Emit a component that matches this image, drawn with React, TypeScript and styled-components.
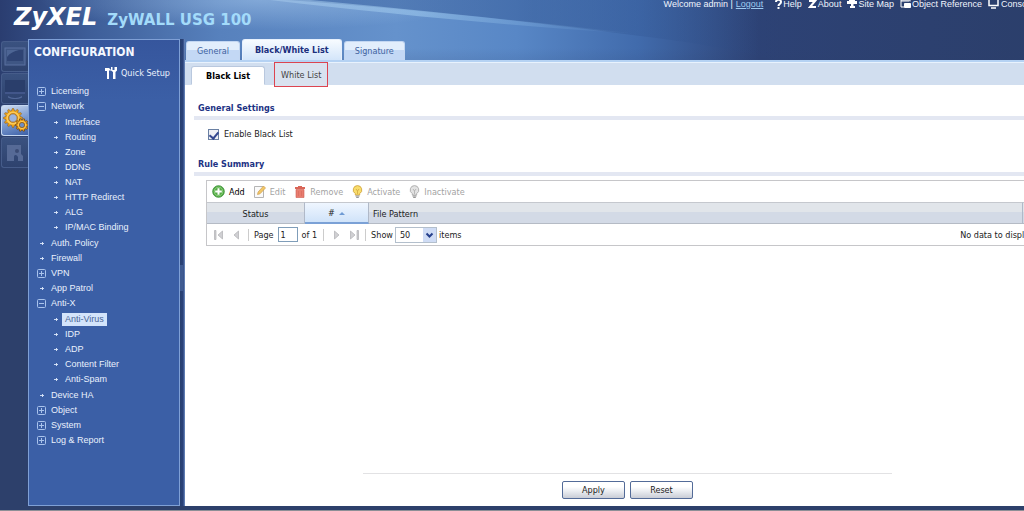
import React from "react";
import styled, { createGlobalStyle } from "styled-components";

const ui = `"DejaVu Sans Condensed", "DejaVu Sans", sans-serif`;
const arial = `"Liberation Sans", Arial, sans-serif`;

const Global = createGlobalStyle`
  * { box-sizing: border-box; }
  html, body, #root { height: 100%; }
  body { margin: 0; overflow: hidden; background: #2d406b; font: 9px/14px ${ui}; color: #222; }
  button, input, select { font: inherit; color: inherit; margin: 0; }
  button { cursor: pointer; }
`;

const Page = styled.div`
  width: calc(100% + 46px);
  height: 100%;
  display: flex;
  flex-direction: column;
  position: relative;
  isolation: isolate;
  white-space: nowrap;
  border-bottom: 1px solid #8d8f96;
`;
const Swoosh = styled.svg`
  position: absolute;
  z-index: -1;
  top: 0;
  left: 0;
`;
const Header = styled.header`
  display: flex;
  justify-content: space-between;
  height: 39px;
  padding: 0 36px 0 14px;
`;
const Brand = styled.div`
  display: flex;
  align-items: baseline;
  gap: 10px;
  font-family: "DejaVu Sans", sans-serif;
  font-weight: bold;
`;
const Logo = styled.span`
  color: #fff;
  font-size: 24px;
  line-height: 34px;
  font-style: italic;
`;
const Model = styled.span`
  color: #a3dbfa;
  font-size: 15px;
`;
const TopLinks = styled.nav`
  display: flex;
  height: 8px;
  align-items: center;
  color: #f0f5fd;
  font-family: ${arial};
`;
const TopLink = styled.a<{ $underline?: boolean; $gap?: number }>`
  display: flex;
  align-items: center;
  gap: 1px;
  margin-left: ${(p) => p.$gap ?? 6}px;
  color: ${(p) => (p.$underline ? "#9fcbf0" : "inherit")};
  text-decoration: ${(p) => (p.$underline ? "underline" : "none")};
`;
const Body = styled.div`
  flex: 1;
  display: flex;
  min-height: 0;
  padding-bottom: 4px;
`;
const Rail = styled.nav`
  width: 28px;
  padding-top: 2px;
  display: flex;
  flex-direction: column;
  gap: 1px;
`;
const RailButton = styled.button<{ $active?: boolean }>`
  height: 31px;
  width: ${(p) => (p.$active ? 28 : 27)}px;
  margin-left: 1px;
  padding: 0;
  display: flex;
  align-items: center;
  justify-content: center;
  border: 1px solid ${(p) => (p.$active ? "#c5d8f2" : "#465c8a")};
  border-right: 0;
  border-radius: 3px 0 0 3px;
  background: ${(p) => (p.$active ? "linear-gradient(160deg, #d0def2, #7c9bd0 50%, #3b5fa7)" : "linear-gradient(#3a5280, #2e426e)")};
`;
const Sidebar = styled.aside`
  width: 152px;
  border: 1px solid #7fa0d6;
  background: linear-gradient(#36569d, #3b5fa6 60px);
  color: #e9f1fd;
  font-family: ${arial};
`;
const SideTitle = styled.h1`
  margin: 0;
  padding: 5px 5px 0;
  font: bold 12px/14px ${ui};
  color: #f4f8ff;
`;
const QuickSetup = styled.a`
  display: flex;
  align-items: center;
  justify-content: flex-end;
  gap: 4px;
  margin: 6px 9px 3px 0;
  height: 16px;
  color: inherit;
  text-decoration: none;
  font-family: ${ui};
`;
const Tree = styled.ul<{ $nested?: boolean }>`
  list-style: none;
  margin: 0;
  padding: ${(p) => (p.$nested ? "1px 0 1px 14px" : "0 0 0 8px")};
`;
const TreeItem = styled.a<{ $selected?: boolean }>`
  display: flex;
  align-items: center;
  gap: 2px;
  height: 15px;
  color: inherit;
  text-decoration: none;
  span {
    padding: 0 3px;
    line-height: 13px;
    background: ${(p) => (p.$selected ? "#d3e4fb" : "none")};
    color: ${(p) => (p.$selected ? "#4a6496" : "inherit")};
  }
`;
const Splitter = styled.div`
  width: 5px;
  display: flex;
  align-items: center;
  background: linear-gradient(90deg, #28406f, #2a427a 60%, #6f8fc4);
`;
const SplitterGrip = styled.i`
  width: 3px;
  height: 26px;
  margin-top: 10px;
  background: #3f5b92;
`;
const Main = styled.main`
  flex: 1;
  min-width: 0;
  display: flex;
  flex-direction: column;
`;
const Tabs = styled.div`
  display: flex;
  align-items: flex-end;
  gap: 2px;
  height: 21px;
  padding-left: 1px;
`;
const Tab = styled.button<{ $active?: boolean }>`
  height: ${(p) => (p.$active ? 21 : 19)}px;
  padding: 0 ${(p) => (p.$active ? 12 : 10)}px;
  border: 1px solid ${(p) => (p.$active ? "#e6f0fd" : "#c3d7f2")};
  border-bottom: 0;
  border-radius: 3px 3px 0 0;
  background: ${(p) => (p.$active ? "linear-gradient(#f7fbff, #d3e5fa)" : "linear-gradient(#e2eefc 45%, #c3d8f5 45%)")};
  color: ${(p) => (p.$active ? "#1b2f7d" : "#41639f")};
  font-weight: ${(p) => (p.$active ? "bold" : "normal")};
`;
const SubTabs = styled.div`
  display: flex;
  align-items: flex-end;
  gap: 9px;
  height: 25px;
  padding-left: 6px;
  position: relative;
  z-index: 1;
  background: #d1deef;
  border-top: 2px solid #b5d2f3;
  box-shadow: inset 0 1px #e8f2fd;
`;
const SubTab = styled.button<{ $active?: boolean }>`
  height: ${(p) => (p.$active ? 19 : 25)}px;
  margin-bottom: ${(p) => (p.$active ? 0 : -2)}px;
  padding: 0 ${(p) => (p.$active ? 14 : 6)}px;
  border: 1px solid ${(p) => (p.$active ? "#b9c8de" : "#dc4450")};
  border-bottom-color: ${(p) => (p.$active ? "#fff" : "#dc4450")};
  border-radius: ${(p) => (p.$active ? "3px 3px 0 0" : "0")};
  background: ${(p) => (p.$active ? "#fff" : "#d9e2ef")};
  color: ${(p) => (p.$active ? "#000" : "#444")};
  font-weight: ${(p) => (p.$active ? "bold" : "normal")};
`;
const Panel = styled.div`
  flex: 1;
  display: flex;
  flex-direction: column;
  background: #fff;
  padding: 16px 9px 7px;
`;
const SectionTitle = styled.h2`
  margin: 0;
  padding: 0 4px 1px;
  border-bottom: 4px solid #e3e7f2;
  color: #1c3284;
  font: bold 9px/14px ${ui};
`;
const CheckRow = styled.label`
  display: flex;
  align-items: center;
  gap: 5px;
  padding: 7px 14px 16px;
  height: 37px;
`;
const Check = styled.input`
  appearance: none;
  width: 11px;
  height: 11px;
  margin: 0;
  border: 1px solid #6a80a3;
  background: #eef0f5;
  display: grid;
  place-items: center;
  &:checked::after {
    content: "";
    width: 4px;
    height: 7px;
    border: solid #33478f;
    border-width: 0 2px 2px 0;
    transform: rotate(40deg);
  }
`;
const GridBox = styled.section`
  margin: 4px 17px 0 12px;
  border: 1px solid #c6c6c9;
`;
const Toolbar = styled.div`
  display: flex;
  align-items: center;
  gap: 9px;
  height: 21px;
  padding-left: 5px;
`;
const Tool = styled.button`
  display: flex;
  align-items: center;
  gap: 4px;
  padding: 0;
  border: 0;
  background: none;
  color: #000;
  &:disabled { color: #a3a3a3; }
`;
const Table = styled.table`
  width: 100%;
  border-collapse: separate;
  border-spacing: 0;
  table-layout: fixed;
`;
const Th = styled.th<{ $w?: number; $sorted?: boolean; $left?: boolean }>`
  width: ${(p) => (p.$w ? p.$w + "px" : "auto")};
  height: 22px;
  padding: 1px 4px 0;
  font-weight: normal;
  text-align: ${(p) => (p.$left ? "left" : "center")};
  border-top: 1px solid #c5c8ce;
  border-right: 1px solid #b0b9c8;
  border-bottom: ${(p) => (p.$sorted ? "2px solid #7ba1d6" : "1px solid #b5bbc5")};
  background: ${(p) => (p.$sorted ? "linear-gradient(#eff6ff, #d0e3f9)" : "linear-gradient(#e1e5ea 45%, #d3dae6 45%)")};
  svg { margin-left: 4px; }
`;
const Pager = styled.div`
  display: flex;
  align-items: center;
  height: 21px;
  padding: 0 9px 0 5px;
`;
const PageNav = styled.div`
  display: flex;
  gap: 8px;
  margin: 0 6px 0 2px;
`;
const PageButton = styled.button`
  display: flex;
  padding: 0;
  border: 0;
  background: none;
`;
const Divider = styled.i`
  width: 1px;
  height: 12px;
  margin-right: 5px;
  background: #ccc;
`;
const PageBox = styled.input`
  width: 20px;
  height: 15px;
  margin: 0 4px;
  padding: 0 2px;
  border: 1px solid #7f9db9;
`;
const PageCount = styled.span`
  margin-right: 6px;
`;
const PageSize = styled.span`
  position: relative;
  display: flex;
  margin: 0 2px;
  svg { position: absolute; right: 1px; top: 1px; pointer-events: none; }
`;
const Select = styled.select`
  appearance: none;
  width: 42px;
  height: 16px;
  padding: 0 4px;
  border: 1px solid #b3bfcc;
  border-radius: 0;
  background: #fff;
`;
const Status = styled.span`
  margin-left: auto;
`;
const Footer = styled.footer`
  display: flex;
  justify-content: center;
  gap: 5px;
  width: 61%;
  margin: auto auto 0;
  padding-top: 7px;
  border-top: 1px solid #e2e2e4;
`;
const FormButton = styled.button`
  width: 63px;
  height: 18px;
  padding: 0;
  border: 1px solid #536b98;
  border-radius: 2px;
  background: linear-gradient(#fff 30%, #eceef2 55%, #c9cdd6);
`;

const ToggleIcon = ({ kind }: { kind: string }) => (
  <svg width="9" height="9" viewBox="0 0 9 9" fill="none" stroke="#a9c3ec">
    {kind !== "leaf" && <rect x=".5" y=".5" width="8" height="8" rx="1" />}
    {kind === "leaf" ? (
      <path d="M3 4.500h4M5.500 3v3" stroke="#dce8fb" strokeWidth=".9" />
    ) : (
      <path d={kind === "plus" ? "M2 4.500h5M4.500 2v5" : "M2 4.500h5"} />
    )}
  </svg>
);

type MenuNode = { t: string; k?: string; c?: string[] };
const tree: MenuNode[] = [
  { t: "Licensing", k: "plus" },
  { t: "Network", k: "minus", c: ["Interface", "Routing", "Zone", "DDNS", "NAT", "HTTP Redirect", "ALG", "IP/MAC Binding"] },
  { t: "Auth. Policy" },
  { t: "Firewall" },
  { t: "VPN", k: "plus" },
  { t: "App Patrol" },
  { t: "Anti-X", k: "minus", c: ["Anti-Virus", "IDP", "ADP", "Content Filter", "Anti-Spam"] },
  { t: "Device HA" },
  { t: "Object", k: "plus" },
  { t: "System", k: "plus" },
  { t: "Log & Report", k: "plus" },
];

const gearPath = (cx: number, cy: number, r: number, n: number) => {
  const pts: string[] = [];
  for (let i = 0; i < n * 4; i++) {
    const a = ((i - 0.5) / (n * 4)) * Math.PI * 2;
    const rr = i % 4 < 2 ? r : r * 0.78;
    pts.push(`${(cx + rr * Math.cos(a)).toFixed(2)} ${(cy + rr * Math.sin(a)).toFixed(2)}`);
  }
  return `M${pts.join("L")}Z`;
};

const Gears = () => (
  <svg width="27" height="25" viewBox="0 0 27 25">
    <path d={gearPath(11, 10, 9.5, 12)} fill="#f0a51b" stroke="#8a5a1a" strokeWidth=".6" />
    <circle cx="11" cy="10" r="5.800" fill="none" stroke="#fbcb58" strokeWidth="1.600" />
    <circle cx="11" cy="10" r="4.200" fill="#9db5de" stroke="#9a6218" strokeWidth=".8" />
    <path d={gearPath(20, 17, 6.5, 10)} fill="#f0a31c" stroke="#6f430f" strokeWidth=".8" />
    <circle cx="20" cy="17" r="3.600" fill="none" stroke="#fbcb58" />
    <circle cx="20" cy="17" r="2.600" fill="#6d8ec8" stroke="#8d5a14" strokeWidth=".8" />
  </svg>
);
const MonitorIcon = () => (
  <svg width="22" height="20" viewBox="0 0 22 20">
    <rect x="1" y="1" width="20" height="17" fill="#3f5684" stroke="#5a70a0" />
    <rect x="3" y="3" width="16" height="11" fill="#2f4474" />
    <path d="M3 10V3h12C10 4 6 6 3 10z" fill="#4d6594" />
  </svg>
);
const ScreenIcon = () => (
  <svg width="22" height="22" viewBox="0 0 22 22">
    <rect x="1" y="2" width="20" height="12" fill="#2a3e6b" />
    <path d="M1 14h20v2H1z" fill="#42568a" />
    <path d="M4 18c4 2.500 10 2.500 14 0v1.500c-4 2-10 2-14 0z" fill="#526899" />
  </svg>
);
const PuzzleIcon = () => (
  <svg width="18" height="20" viewBox="0 0 18 20">
    <path d="M1 2h14v9l2 2v5h-5v-4c-2-3-4-2-4 0v4H1z" fill="#566a96" />
    <circle cx="11" cy="8" r="2" fill="#3a4b74" />
  </svg>
);
const ToolsIcon = () => (
  <svg width="12" height="12" viewBox="0 0 12 12" fill="#fff">
    <path d="M0 1h4l2 2-1 1-1-1v9H2V4H0z" />
    <path d="M6 0h1.500v3h2V0H12v3.500L10.500 5v7H8V5L6 3.500z" />
  </svg>
);
const PageArrow = ({ bar, flip }: { bar?: boolean; flip?: boolean }) => (
  <svg width="10" height="10" viewBox="0 0 10 10" fill="#d0d0d3" stroke="#a6a6aa" strokeWidth=".6">
    <g transform={flip ? "matrix(-1 0 0 1 10 0)" : undefined}>
      {bar && <path d="M.5.5H2v9H.5z" />}
      <path d={bar ? "M8.500 1v8L4 5z" : "M6.500 1v8L2 5z"} />
    </g>
  </svg>
);
const Bulb = ({ color, line }: { color: string; line: string }) => (
  <svg width="11" height="13" viewBox="0 0 11 13">
    <path d="M5.500.6a4.300 4.300 0 0 1 2.200 8v1.400H3.300V8.600a4.300 4.300 0 0 1 2.200-8z" fill={color} stroke={line} strokeWidth=".8" />
    <path d="M3.500 11h4M4.200 12.400h2.600" stroke="#8b8b8b" />
    <path d="M4 4l1.500 2L7 4M5.500 6v3" stroke={line} strokeWidth=".7" fill="none" />
  </svg>
);

const rail = [
  { n: "Dashboard", i: <MonitorIcon /> },
  { n: "Monitor", i: <ScreenIcon /> },
  { n: "Configuration", i: <Gears />, a: true },
  { n: "Maintenance", i: <PuzzleIcon /> },
];

export default function App() {
  return (
    <>
      <Global />
      <Page>
        <Swoosh width="1100" height="160" viewBox="0 0 1100 160" aria-hidden="true">
          <defs>
            <linearGradient id="sky">
              <stop offset="0" stopColor="#2a3d70" />
              <stop offset=".08" stopColor="#3d5d98" />
              <stop offset=".2" stopColor="#5781bd" />
              <stop offset=".36" stopColor="#6592cc" />
              <stop offset=".47" stopColor="#5887c6" />
              <stop offset=".58" stopColor="#416bac" />
              <stop offset=".69" stopColor="#2d4275" />
              <stop offset="1" stopColor="#2b3e69" />
            </linearGradient>
            <linearGradient id="shade" x2="0" y2="1">
              <stop offset="0" stopColor="#2d406b" stopOpacity="0" />
              <stop offset=".3" stopColor="#2d406b" stopOpacity="0" />
              <stop offset="1" stopColor="#2d406b" />
            </linearGradient>
            <radialGradient id="glow" gradientUnits="userSpaceOnUse" cx="260" cy="0" r="1" gradientTransform="translate(260 0) scale(220 30) translate(-260 0)">
              <stop offset="0" stopColor="#a9cbee" stopOpacity=".5" />
              <stop offset="1" stopColor="#a9cbee" stopOpacity="0" />
            </radialGradient>
            <linearGradient id="beam">
              <stop offset="0" stopColor="#a5c8ea" stopOpacity=".55" />
              <stop offset=".4" stopColor="#a5d0f2" stopOpacity=".5" />
              <stop offset="1" stopColor="#7fb0e0" stopOpacity="0" />
            </linearGradient>
            <linearGradient id="dusk">
              <stop offset="0" stopColor="#2a4c88" stopOpacity=".25" />
              <stop offset=".5" stopColor="#2a4c88" stopOpacity=".4" />
              <stop offset="1" stopColor="#2a4c88" stopOpacity="0" />
            </linearGradient>
          </defs>
          <rect width="1100" height="160" fill="url(#sky)" />
          <path d="M0 0H290C400 8 500 20 610 34V60H0Z" fill="url(#glow)" />
          <path d="M285 0C400 8 500 18 640 36C690 42 740 50 780 62V0Z" fill="url(#dusk)" />
          <path d="M270 0H310C400 8 510 20 640 34C510 26 390 14 270 0Z" fill="url(#beam)" />
          <rect width="1100" height="160" fill="url(#shade)" />
        </Swoosh>
        <Header>
          <Brand>
            <Logo>ZyXEL</Logo>
            <Model>ZyWALL USG 100</Model>
          </Brand>
          <TopLinks>
            Welcome admin |
            <TopLink href="#logout" $underline $gap={3}>Logout</TopLink>
            <TopLink href="#help" $gap={12}>
              <svg width="7" height="10" viewBox="0 0 7 10" fill="none" stroke="#fff" strokeWidth="2"><path d="M1 3c0-3 5-3 5 0 0 2-2.500 2-2.500 4M3.500 8v2" /></svg>Help
            </TopLink>
            <TopLink href="#about">
              <svg width="9" height="10" viewBox="0 0 9 10" fill="none" stroke="#fff" strokeWidth="2"><path d="M1 2h6L2 8h6" /></svg>About
            </TopLink>
            <TopLink href="#map">
              <svg width="10" height="10" viewBox="0 0 10 10" fill="#fff"><path d="M2 0h6v2h2v3H6.500v2H8v2H3V7h1V5H0V2h2z" /></svg>Site Map
            </TopLink>
            <TopLink href="#object">
              <svg width="11" height="10" viewBox="0 0 11 10" fill="none" stroke="#fff"><path d="M10 2.500V1H1v7h3M1 2h8" /><path d="M4.500 4.500h6v4h-6z" fill="#fff" /></svg>Object Reference
            </TopLink>
            <TopLink href="#console">
              <svg width="12" height="10" viewBox="0 0 12 10" fill="none" stroke="#fff" strokeWidth="1.500"><path d="M1 0v6.500h9V0M3 9h5" /></svg>Console
            </TopLink>
          </TopLinks>
        </Header>
        <Body>
          <Rail>
            {rail.map((r) => (
              <RailButton key={r.n} $active={r.a} aria-label={r.n}>{r.i}</RailButton>
            ))}
          </Rail>
          <Sidebar>
            <SideTitle>CONFIGURATION</SideTitle>
            <QuickSetup href="#setup"><ToolsIcon />Quick Setup</QuickSetup>
            <Tree>
              {tree.map((n) => (
                <li key={n.t}>
                  <TreeItem href="#"><ToggleIcon kind={n.k ?? "leaf"} /><span>{n.t}</span></TreeItem>
                  {n.c && (
                    <Tree $nested>
                      {n.c.map((c) => (
                        <li key={c}>
                          <TreeItem href="#" $selected={c === "Anti-Virus"}><ToggleIcon kind="leaf" /><span>{c}</span></TreeItem>
                        </li>
                      ))}
                    </Tree>
                  )}
                </li>
              ))}
            </Tree>
          </Sidebar>
          <Splitter><SplitterGrip /></Splitter>
          <Main>
            <Tabs>
              <Tab>General</Tab>
              <Tab $active>Black/White List</Tab>
              <Tab>Signature</Tab>
            </Tabs>
            <SubTabs>
              <SubTab $active>Black List</SubTab>
              <SubTab>White List</SubTab>
            </SubTabs>
            <Panel>
              <SectionTitle>General Settings</SectionTitle>
              <CheckRow><Check type="checkbox" defaultChecked />Enable Black List</CheckRow>
              <SectionTitle>Rule Summary</SectionTitle>
              <GridBox>
                <Toolbar>
                  <Tool>
                    <svg width="13" height="13" viewBox="0 0 13 13"><circle cx="6.500" cy="6.500" r="5.800" fill="#54ab45" stroke="#2f8a2c" strokeWidth=".8" /><circle cx="6.500" cy="6.500" r="4.300" fill="none" stroke="#a4dc93" strokeWidth=".7" /><path d="M6.500 3.200v6.600M3.200 6.500h6.600" stroke="#fff" strokeWidth="2" /></svg>Add
                  </Tool>
                  <Tool disabled>
                    <svg width="12" height="13" viewBox="0 0 12 13"><path d="M.5 1.500h9v11h-9z" fill="#fafafa" stroke="#b5b5b5" /><path d="M3.500 9.500l.6-2.500L9.500 1 11.500 3 6 8.800z" fill="#f2c867" stroke="#cf9d50" strokeWidth=".7" /></svg>Edit
                  </Tool>
                  <Tool disabled>
                    <svg width="12" height="13" viewBox="0 0 12 13"><path d="M4 1h4v1h3v2H1V2h3z" fill="#d96558" /><path d="M2 4.500h8V12.500H2z" fill="#e87d6f" stroke="#cc5c50" strokeWidth=".6" /><path d="M4.500 6v5M7.500 6v5" stroke="#d96a5e" strokeWidth=".7" /></svg>Remove
                  </Tool>
                  <Tool disabled><Bulb color="#f8dc6b" line="#cda03a" />Activate</Tool>
                  <Tool disabled><Bulb color="#e3e3e3" line="#a5a5a5" />Inactivate</Tool>
                </Toolbar>
                <Table>
                  <thead>
                    <tr>
                      <Th $w={98}>Status</Th>
                      <Th $w={64} $sorted>#<svg width="6" height="5" viewBox="0 0 6 5"><path d="M3 1l3 3H0z" fill="#6f9bd4" /></svg></Th>
                      <Th $left>File Pattern</Th>
                      <Th $w={20} aria-label="Scroll gutter" />
                    </tr>
                  </thead>
                </Table>
                <Pager>
                  <PageNav>
                    <PageButton aria-label="First page"><PageArrow bar /></PageButton>
                    <PageButton aria-label="Previous page"><PageArrow /></PageButton>
                  </PageNav>
                  <Divider />
                  <label htmlFor="page">Page</label>
                  <PageBox id="page" defaultValue="1" />
                  <PageCount>of 1</PageCount>
                  <Divider />
                  <PageNav>
                    <PageButton aria-label="Next page"><PageArrow flip /></PageButton>
                    <PageButton aria-label="Last page"><PageArrow bar flip /></PageButton>
                  </PageNav>
                  <Divider />
                  <label htmlFor="size">Show</label>
                  <PageSize>
                    <Select id="size" defaultValue="50"><option>50</option></Select>
                    <svg width="13" height="14" viewBox="0 0 13 14"><rect width="13" height="14" fill="#cfdcf5" /><path d="M3.500 5.500l3 3 3-3" fill="none" stroke="#26408c" strokeWidth="2" /></svg>
                  </PageSize>
                  items
                  <Status>No data to display</Status>
                </Pager>
              </GridBox>
              <Footer>
                <FormButton>Apply</FormButton>
                <FormButton>Reset</FormButton>
              </Footer>
            </Panel>
          </Main>
        </Body>
      </Page>
    </>
  );
}
